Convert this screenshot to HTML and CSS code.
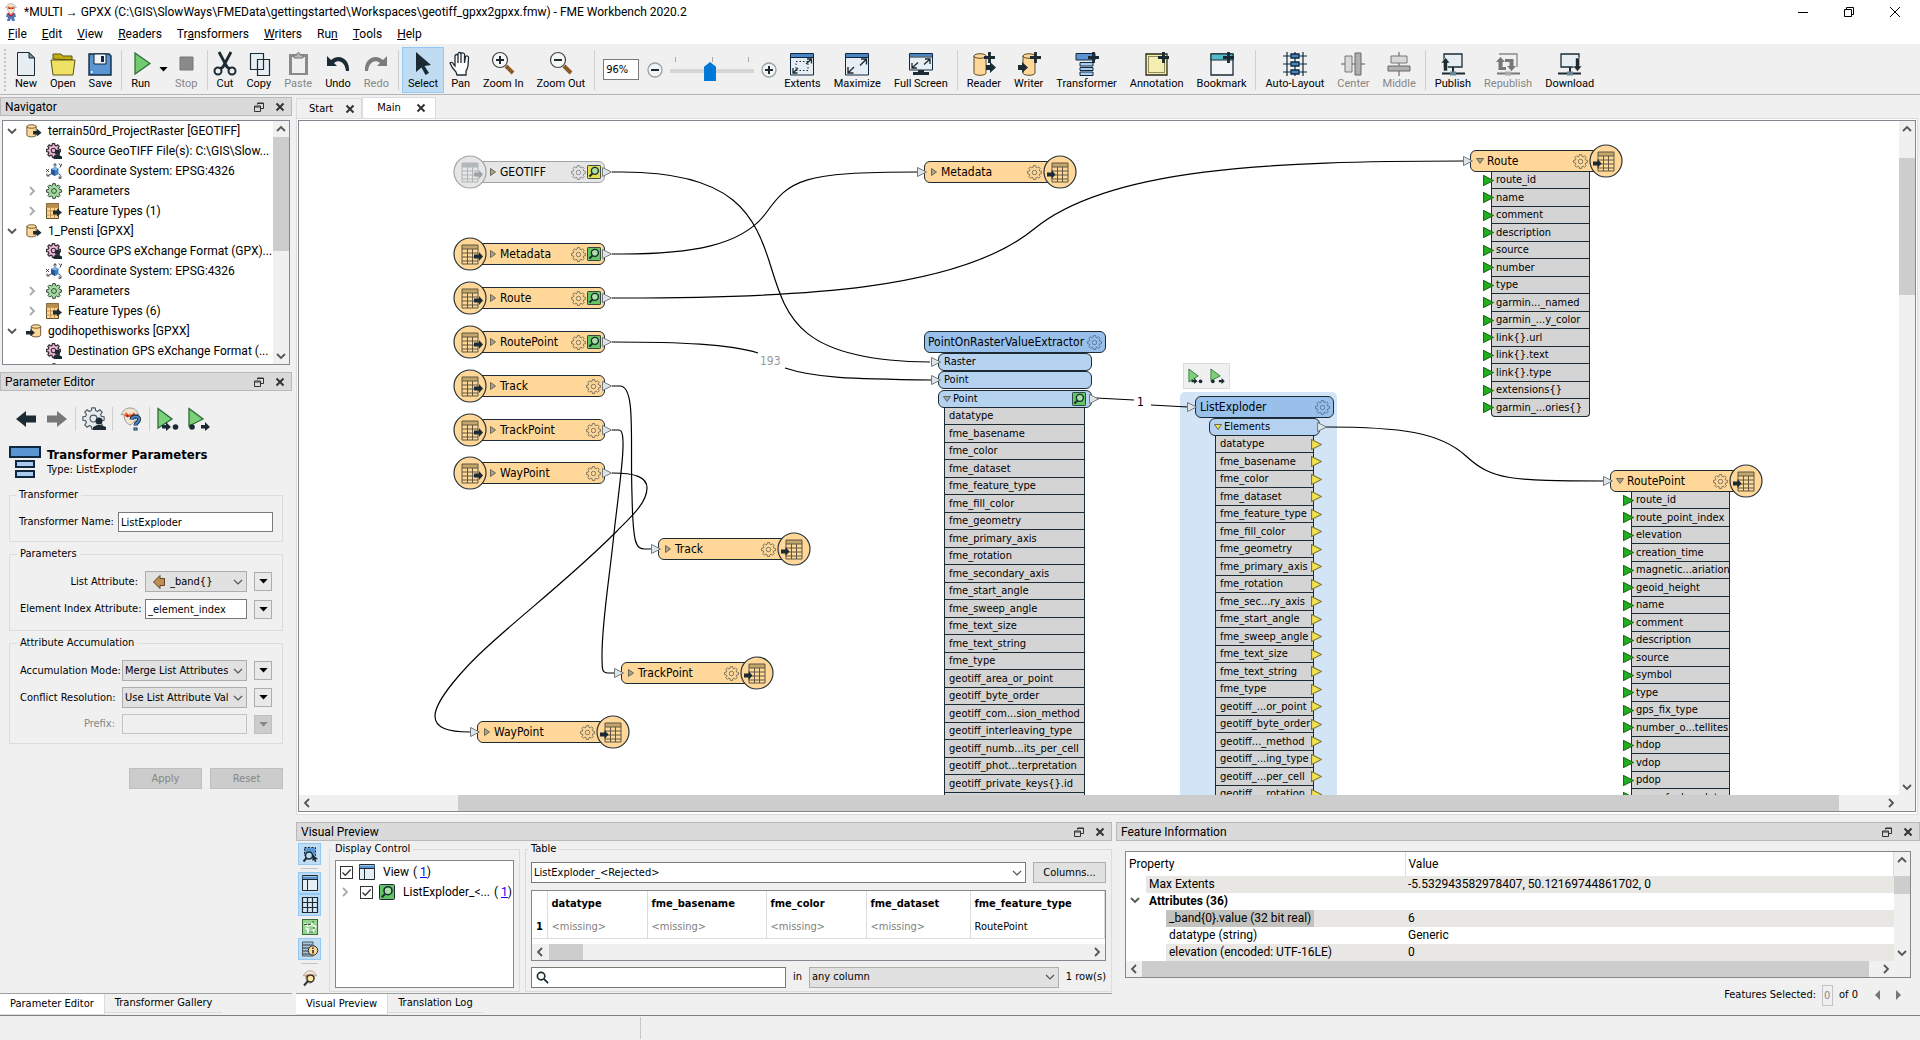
FILE: index.html
```html
<!DOCTYPE html>
<html lang="en">
<head>
<meta charset="utf-8">
<title>FME Workbench 2020.2</title>
<link rel="stylesheet" href="styles.css">
</head>
<body>
<svg class="defs" aria-hidden="true">
  <symbol id="gear" viewBox="-8 -8 16 16"><path d="M5.5-1.5L7.4-1.2V1.2L5.5 1.5L4.9 2.8L6.1 4.4L4.4 6.1L2.8 4.9L1.5 5.5L1.2 7.4H-1.2L-1.5 5.5L-2.8 4.9L-4.4 6.1L-6.1 4.4L-4.9 2.8L-5.5 1.5L-7.4 1.2V-1.2L-5.5-1.5L-4.9-2.8L-6.1-4.4L-4.4-6.1L-2.8-4.9L-1.5-5.5L-1.2-7.4H1.2L1.5-5.5L2.8-4.9L4.4-6.1L6.1-4.4L4.9-2.8Z" stroke-linejoin="round"/><circle r="2.4"/></symbol>
  <symbol id="inspect" viewBox="0 0 16 16"><rect x=".5" y=".5" width="15" height="15" rx="1" stroke="#1c2b33" fill="inherit"/><circle cx="9" cy="6.7" r="4" fill="#a9e0a4" stroke="#1c2b33" stroke-width="1.6"/><path d="M6 10L2.8 13.2" stroke="#1c2b33" stroke-width="2.2"/></symbol>
  <symbol id="reader-badge" viewBox="0 0 34 34"><circle cx="17" cy="17" r="16" fill="#ffd899" stroke="#2a3338" stroke-width="1.2"/><path d="M9 8H25V12H9Z" fill="#c4a56c"/><path d="M9 8H25V27H9ZM9 12H25M9 16H25M9 20H25M9 24H25M14.500 12V27M19.500 12V27" fill="none" stroke="#5d5643"/><path d="M21 17.500H26V15L30 19.500L26 24V21.500H21Z" fill="#1c2b33"/></symbol>
  <symbol id="reader-badge-off" viewBox="0 0 34 34"><circle cx="17" cy="17" r="16" fill="#e6e6e6" stroke="#a0a4a6" stroke-width="1.200"/><path d="M9 8H25V12H9Z" fill="#b4babc"/><path d="M9 8H25V27H9ZM9 12H25M9 16H25M9 20H25M9 24H25M14.500 12V27M19.500 12V27" fill="none" stroke="#b0b5b7"/><path d="M21 17.500H26V15L30 19.500L26 24V21.500H21Z" fill="#9ba3a6"/></symbol>
  <symbol id="writer-badge" viewBox="0 0 34 34"><circle cx="17" cy="17" r="16" fill="#ffd899" stroke="#2a3338" stroke-width="1.200"/><path d="M9 8H25V12H9Z" fill="#c4a56c"/><path d="M9 8H25V27H9ZM9 12H25M9 16H25M9 20H25M9 24H25M14.500 12V27M19.500 12V27" fill="none" stroke="#5d5643"/><path d="M4 17.500H8.500V15L12.500 19.500L8.500 24V21.500H4Z" fill="#1c2b33"/></symbol>
  <symbol id="port" viewBox="0 0 10 10"><path d="M.5.5L9.500 5L.5 9.500Z" fill="#dde5ea" stroke="#77797b"/></symbol>
  <symbol id="arr-green" viewBox="0 0 10 10"><path d="M.5.500L9.500 5L.5 9.500Z" fill="#22b01e" stroke="#1c6e1a"/></symbol>
  <symbol id="arr-yellow" viewBox="0 0 10 10"><path d="M.5.500L9.500 5L.5 9.500Z" fill="#f2e24e" stroke="#7d7633"/></symbol>
  <symbol id="tri-r" viewBox="0 0 8 8"><path d="M1.500.5L6.500 4L1.500 7.500Z" fill="#a9a48c" stroke="#6c6654"/></symbol>
  <symbol id="tri-d" viewBox="0 0 8 8"><path d="M.5 1.500L4 6.500L7.500 1.500Z" stroke="#6c6654"/></symbol>
  <symbol id="chev-r" viewBox="0 0 10 10"><path d="M3 1L7 5L3 9" fill="none" stroke-width="1.800"/></symbol>
  <symbol id="chev-d" viewBox="0 0 10 10"><path d="M1 3L5 7L9 3" fill="none" stroke-width="1.800"/></symbol>
  <symbol id="chev-u" viewBox="0 0 10 10"><path d="M1 7L5 3L9 7" fill="none" stroke-width="1.800"/></symbol>
  <symbol id="chev-l" viewBox="0 0 10 10"><path d="M7 1L3 5L7 9" fill="none" stroke-width="1.800"/></symbol>
  <symbol id="combo-v" viewBox="0 0 10 10"><path d="M1 3L5 7L9 3" fill="none" stroke="#555" stroke-width="1.200"/></symbol>
  <symbol id="drop" viewBox="0 0 10 6"><path d="M0 0H10L5 5.500Z" fill="currentColor"/></symbol>
  <symbol id="float" viewBox="0 0 10 10"><path d="M3.500 2.500V1H9.500V6.500H7M.5 4H6.500V9.500H.5ZM.5 5H6.500M3.500 1.500H9.500" fill="none" stroke="#333"/></symbol>
  <symbol id="close" viewBox="0 0 10 10"><path d="M1.500 1.500L8.500 8.500M8.500 1.500L1.500 8.500" stroke="#333" stroke-width="2"/></symbol>
  <symbol id="db-out" viewBox="0 0 18 18"><path d="M1 4C1 1.300 11.500 1.300 11.500 4V13.500C11.500 16.300 1 16.300 1 13.500Z" fill="#ffd899" stroke="#5c4a26"/><path d="M1 4C1 6.500 11.500 6.500 11.500 4" fill="none" stroke="#5c4a26"/><path d="M8 9H12.500V6.500L17.500 11L12.500 15V13H8Z" fill="#1c2b33"/></symbol>
  <symbol id="db-in" viewBox="0 0 18 18"><path d="M6 4C6 1.300 16.500 1.300 16.500 4V13.500C16.500 16.300 6 16.300 6 13.500Z" fill="#ffd899" stroke="#5c4a26"/><path d="M6 4C6 6.500 16.500 6.500 16.500 4" fill="none" stroke="#5c4a26"/><path d="M0 9H5V6.500L10 11L5 15V13H0Z" fill="#1c2b33"/></symbol>
  <symbol id="gear-user" viewBox="-8 -8 16 16"><use href="#gear" x="-8" y="-8" width="15" height="15" fill="#eebbd8" stroke="#3a2b35" stroke-width="1.300"/><circle cx="3.500" cy="1.200" r="2.600" fill="#1c2b33"/><path d="M-.5 8V5.500L2.500 4H5L8 5.500V8Z" fill="#1c2b33"/></symbol>
  <symbol id="cube" viewBox="0 0 16 16"><path d="M5 6L9 4L12.500 5.500V11L9 13L5 11Z" fill="#3f7fc4"/><path d="M5 6L9 4L12.500 5.500L9 7.500Z" fill="#7fb2e6"/><path d="M9 7.500V13L5 11V6Z" fill="#275a94"/><path d="M9 4V1M7.500 2.500L9 .5L10.500 2.500M5 11L2 12.500M1 10.500V13H3.500M12.500 11L15 12.500M0 6L3 9M3 6L0 9M13 .5L14.500 2.500M16 .5L14 4.500M12.500 14H15.500L12.500 16H15.500" stroke="#334" stroke-width=".9" fill="none"/></symbol>
  <symbol id="ftype" viewBox="0 0 16 16"><path d="M.5.5H12.500V15.500H.5Z" fill="#ffd899" stroke="#5c4a26"/><path d="M.5.5H12.500V4.500H.5Z" fill="#b98d4f"/><path d="M.5 4.500H12.500M.5 8H12.500M.5 12H12.500M4.500 4.500V15.500M8.500 4.500V15.500" stroke="#c19650" fill="none"/><path d="M7 7.500H11V5.500L16 9.500L11 13.500V11.500H7Z" fill="#1c2b33"/></symbol>
  <symbol id="run-to" viewBox="0 0 22 24"><path d="M1 1.500L15 12L1 21Z" fill="#7bd179" stroke="#2c6b33" stroke-width="1.300"/><path d="M5 18H9V15L14 20L9 24V21.500H5Z" fill="#1c2b33"/><circle cx="18.500" cy="20" r="2.800" fill="#1c2b33"/></symbol>
  <symbol id="run-from" viewBox="0 0 22 24"><path d="M1 1.500L15 12L1 19Z" fill="#7bd179" stroke="#2c6b33" stroke-width="1.300"/><circle cx="4" cy="20" r="2.800" fill="#1c2b33"/><path d="M13 18H17V15L22 20L17 24V21.500H13Z" fill="#1c2b33"/></symbol>
  <symbol id="view" viewBox="0 0 16 16"><path d="M.5.500H15.500V15.500H.5Z" fill="#e6eef3" stroke="#1c2b33"/><path d="M.5 1.500H15.500V4H.5Z" fill="#5a95d2"/><path d="M.5 4.500H15.500M5.500 4.500V15.500" stroke="#1c2b33"/></symbol>
  <symbol id="plus" viewBox="0 0 10 10"><path d="M5 0V10M0 5H10" stroke="#1c2b33" stroke-width="2.600"/></symbol>
  <symbol id="face" viewBox="0 0 20 20"><path d="M10 1C5 1 3 4 1 8L4 7C4 13 6 16 10 18C14 16 16 13 16 7L19 8C17 4 15 1 10 1Z" fill="#f3e6d0" stroke="#999"/><path d="M6 5L9 8L10 6L11 8L14 5L16 9L12 10H8L4 9Z" fill="#e8642c"/><circle cx="7.500" cy="9" r="1.200" fill="#a11"/><circle cx="12.500" cy="9" r="1.200" fill="#a11"/></symbol>
</svg>

<header class="titlebar">
  <svg class="logo" viewBox="0 0 16 18"><use href="#face" width="16" height="12"/><path d="M4 10L8 12L12 10L13 14L11 14L12 18H9L8 15L7 18H4L5 14H3Z" fill="#4a76b5"/><path d="M5 10L8 13L11 10" fill="none" stroke="#c22" stroke-width="1.500"/></svg>
  <h1>*MULTI → GPXX (C:\GIS\SlowWays\FMEData\gettingstarted\Workspaces\geotiff_gpxx2gpxx.fmw) - FME Workbench 2020.2</h1>
  <div class="winbtns">
    <button aria-label="Minimize"><svg viewBox="0 0 10 10"><path d="M0 5.500H10" stroke="#000"/></svg></button>
    <button aria-label="Restore"><svg viewBox="0 0 10 10"><path d="M.5 2.500H7.500V9.500H.5ZM2.500 2.500V.5H9.500V7.500H7.500" fill="none" stroke="#000"/></svg></button>
    <button aria-label="Close"><svg viewBox="0 0 10 10"><path d="M0 0L10 10M10 0L0 10" stroke="#000"/></svg></button>
  </div>
</header>
<nav class="menubar">
  <button><u>F</u>ile</button><button><u>E</u>dit</button><button><u>V</u>iew</button><button><u>R</u>eaders</button><button>Tr<u>a</u>nsformers</button><button><u>W</u>riters</button><button>Ru<u>n</u></button><button><u>T</u>ools</button><button><u>H</u>elp</button>
</nav>

<div class="toolbar" role="toolbar">
  <span class="grip"></span>
  <button class="tool"><svg viewBox="0 0 24 24"><path d="M3.500.500H15L20.500 6V23.500H3.500Z" fill="#e6eef3" stroke="#1c2b33"/><path d="M15 .5V6H20.500Z" fill="#7796a6" stroke="#1c2b33"/></svg>New</button>
  <button class="tool"><svg viewBox="0 0 24 24"><path d="M2 7V2H10L12 4H21V8Z" fill="#c3ae12" stroke="#5c5410"/><path d="M0 8H24L22 23H2Z" fill="#efe163" stroke="#5c5410"/></svg>Open</button>
  <button class="tool"><svg viewBox="0 0 24 24"><path d="M1 2H21L23 4V23H1Z" fill="#5a95d2" stroke="#10283f" stroke-width="1.400"/><path d="M6 2H18V12H6Z" fill="#f2f6f8" stroke="#10283f"/><path d="M13 4H16V10H13Z" fill="#10283f"/><path d="M3 19H4.500V21H3Z" fill="#fff"/></svg>Save</button>
  <span class="sep"></span>
  <button class="tool"><svg viewBox="0 0 24 24"><path d="M6 1L21 11.500L6 22Z" fill="#71cc6f" stroke="#2c6b33" stroke-width="1.200"/></svg>Run</button>
  <button class="drop" aria-label="Run options"><svg viewBox="0 0 10 6"><use href="#drop"/></svg></button>
  <button class="tool" disabled><svg viewBox="0 0 24 24"><path d="M6 5H19V18H6Z" fill="#8a8a8a" stroke="#777"/></svg>Stop</button>
  <span class="sep"></span>
  <button class="tool"><svg viewBox="0 0 24 24"><path d="M6 0L14 15L17 17M18 0L10 15L7 17" stroke="#1c2b33" stroke-width="2.800" fill="none"/><circle cx="5" cy="19" r="3.500" fill="none" stroke="#1c2b33" stroke-width="2"/><circle cx="19" cy="19" r="3.500" fill="none" stroke="#1c2b33" stroke-width="2"/></svg>Cut</button>
  <button class="tool"><svg viewBox="0 0 24 24"><path d="M3.500 1.500H16.500V17.500H3.500ZM10.500 7.500H22.500V23.500H10.500Z" fill="#e6eef3" stroke="#1c2b33" stroke-width="1.200"/></svg>Copy</button>
  <button class="tool" disabled><svg viewBox="0 0 24 24"><path d="M3 2H22V23H3Z" fill="#8a8a8a"/><path d="M6 5H19V21H6Z" fill="#efefef"/><path d="M8 3H11C11-.5 14-.500 14 3H17V6H8Z" fill="#bbb" stroke="#777"/></svg>Paste</button>
  <button class="tool"><svg viewBox="0 0 24 24"><path d="M1 4V14H11L8 11C13 7 19 10 20 19L23 19C24 7 13 1 5 8Z" fill="#1c2b33"/></svg>Undo</button>
  <button class="tool" disabled><svg viewBox="0 0 24 24"><path d="M23 4V14H13L16 11C11 7 5 10 4 19L1 19C0 7 11 1 19 8Z" fill="#7c7c7c"/></svg>Redo</button>
  <span class="sep"></span>
  <button class="tool on"><svg viewBox="0 0 24 24"><path d="M5 0L20 13L13.500 14L18 21L14.500 23L10.500 15.500L5 20Z" fill="#1c2b33"/></svg>Select</button>
  <button class="tool"><svg viewBox="0 0 24 24"><path d="M8 23L7 20C4 17 2 14 1 11C2 10 4 10 5 13L6 14V4C6 2 9 2 9 4V11V2C9 0 12 0 12 2V11V2C13 0 16 1 15.500 3V11L16.500 5C17 3 20 4 19.500 6C19 11 20 15 17 19V23Z" fill="#fff" stroke="#1c2b33" stroke-width="1.300"/></svg>Pan</button>
  <button class="tool"><svg viewBox="0 0 24 24"><circle cx="9" cy="8" r="7.500" fill="#f7f7f7" stroke="#444" stroke-width="1.200"/><path d="M9 4V12M5 8H13" stroke="#1c2b33" stroke-width="2"/><path d="M15 14L22 21" stroke="#8d5a24" stroke-width="4"/></svg>Zoom In</button>
  <button class="tool"><svg viewBox="0 0 24 24"><circle cx="9" cy="8" r="7.500" fill="#f7f7f7" stroke="#444" stroke-width="1.200"/><path d="M5 8H13" stroke="#1c2b33" stroke-width="2"/><path d="M15 14L22 21" stroke="#8d5a24" stroke-width="4"/></svg>Zoom Out</button>
  <span class="sep"></span>
  <input class="zoombox" type="text" value="96%" aria-label="Zoom level">
  <button class="round" aria-label="Zoom out"><svg viewBox="0 0 16 16"><circle cx="8" cy="8" r="7" fill="#f2f4f5" stroke="#9aa0a4" stroke-width="1.300"/><path d="M4 8H12" stroke="#1c2b33" stroke-width="2"/></svg></button>
  <span class="slider"><input type="range" min="0" max="100" value="47" aria-label="Zoom"></span>
  <button class="round" aria-label="Zoom in"><svg viewBox="0 0 16 16"><circle cx="8" cy="8" r="7" fill="#f2f4f5" stroke="#9aa0a4" stroke-width="1.300"/><path d="M4 8H12M8 4V12" stroke="#1c2b33" stroke-width="2"/></svg></button>
  <button class="tool"><svg viewBox="0 0 24 24"><path d="M.5 1.500H23.500V23H.5Z" fill="#e6eef3" stroke="#10283f"/><path d="M1 2H23V5H1Z" fill="#4a86c6"/><path d="M.5 5.500H23.500" stroke="#10283f"/><path d="M6 9.500H18V18.500H6Z" fill="none" stroke="#10283f" stroke-dasharray="1.500 2"/><path d="M17 7H21.500V11.500M21 7.500L16 12M3 16V21H7.500M3.500 20.500L8 16" fill="none" stroke="#1c2b33" stroke-width="1.300"/></svg>Extents</button>
  <button class="tool"><svg viewBox="0 0 24 24"><path d="M.5 1.500H23.500V23H.5Z" fill="#e6eef3" stroke="#10283f"/><path d="M1 2H23V5H1Z" fill="#4a86c6"/><path d="M.5 5.500H23.500" stroke="#10283f"/><path d="M16 7H21.500V12.500M21 7.500L15 13.500M3 15V21H8.500M3.500 20.500L9 15" fill="none" stroke="#1c2b33" stroke-width="1.400"/></svg>Maximize</button>
  <button class="tool"><svg viewBox="0 0 24 24"><path d="M.5 1.500H23.500V18H.5Z" fill="#e6eef3" stroke="#10283f"/><path d="M1 2H23V4.500H1Z" fill="#4a86c6"/><path d="M.5 5H23.500" stroke="#10283f"/><path d="M16 7H21V12M20.500 7.500L15 12.500M3 11V16H8M3.500 15.500L9 10.500" fill="none" stroke="#1c2b33" stroke-width="1.300"/><path d="M9 18H15V20H20V23H4V20H9Z" fill="#1c2b33"/></svg>Full Screen</button>
  <span class="sep"></span>
  <button class="tool"><svg viewBox="0 0 24 24"><path d="M2 4C2 1 14 1 14 4V21C14 24 2 24 2 21Z" fill="#ffd899" stroke="#5c4a26"/><path d="M2 4C2 7 14 7 14 4" fill="none" stroke="#5c4a26"/><use href="#plus" x="12" y="0" width="11" height="11"/><path d="M14 13H18V10L24 15.500L18 21V18H14Z" fill="#1c2b33"/></svg>Reader</button>
  <button class="tool"><svg viewBox="0 0 24 24"><path d="M6 4C6 1 18 1 18 4V21C18 24 6 24 6 21Z" fill="#ffd899" stroke="#5c4a26"/><path d="M6 4C6 7 18 7 18 4" fill="none" stroke="#5c4a26"/><use href="#plus" x="13" y="0" width="11" height="11"/><path d="M1 13H5V10L11 15.500L5 21V18H1Z" fill="#1c2b33"/></svg>Writer</button>
  <button class="tool"><svg viewBox="0 0 24 24"><path d="M1 1.500H20V8H1Z" fill="#5a95d2" stroke="#10283f"/><use href="#plus" x="13" y="0" width="11" height="11"/><path d="M5 10.500H18V14H5ZM5 15.500H18V18.500H5ZM5 20H18V23.500H5Z" fill="#a9ccf0" stroke="#10283f"/></svg>Transformer</button>
  <button class="tool"><svg viewBox="0 0 24 24"><path d="M1 2H22V23H1Z" fill="#f3eeb0" stroke="#2c2a14" stroke-width="1.300"/><path d="M3.500 4.500H19.500V20.500H3.500Z" fill="none" stroke="#2c2a14" stroke-dasharray="1 1"/><use href="#plus" x="13" y="0" width="11" height="11"/></svg>Annotation</button>
  <button class="tool"><svg viewBox="0 0 24 24"><path d="M1 2H23V23H1Z" fill="#f2f4f5" stroke="#1c2b33" stroke-width="1.300"/><path d="M1 2H23V8H1Z" fill="#53bcc6" stroke="#1c2b33"/><use href="#plus" x="13" y="0" width="11" height="11"/></svg>Bookmark</button>
  <span class="sep"></span>
  <button class="tool"><svg viewBox="0 0 24 24"><path d="M0 4H24M0 12H24M0 20H24M4 0V24M20 0V24M12 0V24" stroke="#10283f" stroke-width="1.200"/><path d="M8 2H16V6H8ZM8 10H16V14H8ZM8 18H16V22H8Z" fill="#4a86c6" stroke="#10283f" stroke-width="1.300"/></svg>Auto-Layout</button>
  <button class="tool" disabled><svg viewBox="0 0 24 24"><path d="M0 12H24" stroke="#777" stroke-width="1.300"/><path d="M4 4H11V20H4Z" fill="#d9d9d9" stroke="#777"/><path d="M14 1H20V23H14Z" fill="#b0b0b0" stroke="#666"/></svg>Center</button>
  <button class="tool" disabled><svg viewBox="0 0 24 24"><path d="M12 0V24" stroke="#777" stroke-width="1.300"/><path d="M4 4H20V11H4Z" fill="#d9d9d9" stroke="#777"/><path d="M1 14H23V19H1Z" fill="#b0b0b0" stroke="#666"/></svg>Middle</button>
  <span class="sep"></span>
  <button class="tool"><svg viewBox="0 0 24 24"><path d="M3 2H21V15H3Z" fill="#e6eef3" stroke="#1c2b33" stroke-width="1.300"/><path d="M12 15V20M1 21.500H24" stroke="#1c2b33" stroke-width="2"/><path d="M9 19.500H15V23.500H9Z" fill="#6a8797"/><path d="M0 11L4.500 5.500L9 11H6.500V19H2.500V11Z" fill="#1c2b33" stroke="#efefef" stroke-width=".6"/></svg>Publish</button>
  <button class="tool" disabled><svg viewBox="0 0 24 24"><path d="M3 2H21V15" fill="none" stroke="#888" stroke-width="1.300"/><path d="M1 21.500H24" stroke="#777" stroke-width="2"/><path d="M9 19.500H15V23.500H9Z" fill="#aaa"/><path d="M0 10L4.500 5L9 10H6.500V15H10V18H2.500V10ZM9 7H17.500V14H20L15.500 19L11 14H13.500V10H9Z" fill="#777"/></svg>Republish</button>
  <button class="tool"><svg viewBox="0 0 24 24"><path d="M3 2H21V15H3Z" fill="#e6eef3" stroke="#1c2b33" stroke-width="1.300"/><path d="M12 15V20M0 21.500H23" stroke="#1c2b33" stroke-width="2"/><path d="M9 19.500H15V23.500H9Z" fill="#6a8797"/><path d="M15 14L19.500 19.500L24 14H21.500V6H17.500V14Z" fill="#1c2b33" stroke="#efefef" stroke-width=".6"/></svg>Download</button>
</div>

<main class="work">
  <aside class="left">
    <div class="dock-title"><h2>Navigator</h2><button aria-label="Float"><svg><use href="#float"/></svg></button><button aria-label="Close"><svg><use href="#close"/></svg></button></div>
    <div class="nav-box">
      <ul class="tree">
        <li class="lv1"><svg class="tw open"><use href="#chev-d"/></svg><svg class="ic"><use href="#db-out"/></svg>terrain50rd_ProjectRaster [GEOTIFF]</li>
        <li><span class="tw"></span><svg class="ic"><use href="#gear-user"/></svg>Source GeoTIFF File(s): C:\GIS\Slow...</li>
        <li><span class="tw"></span><svg class="ic"><use href="#cube"/></svg>Coordinate System: EPSG:4326</li>
        <li><svg class="tw"><use href="#chev-r"/></svg><svg class="ic green"><use href="#gear"/></svg>Parameters</li>
        <li><svg class="tw"><use href="#chev-r"/></svg><svg class="ic"><use href="#ftype"/></svg>Feature Types (1)</li>
        <li class="lv1"><svg class="tw open"><use href="#chev-d"/></svg><svg class="ic"><use href="#db-out"/></svg>1_Pensti [GPXX]</li>
        <li><span class="tw"></span><svg class="ic"><use href="#gear-user"/></svg>Source GPS eXchange Format (GPX)...</li>
        <li><span class="tw"></span><svg class="ic"><use href="#cube"/></svg>Coordinate System: EPSG:4326</li>
        <li><svg class="tw"><use href="#chev-r"/></svg><svg class="ic green"><use href="#gear"/></svg>Parameters</li>
        <li><svg class="tw"><use href="#chev-r"/></svg><svg class="ic"><use href="#ftype"/></svg>Feature Types (6)</li>
        <li class="lv1"><svg class="tw open"><use href="#chev-d"/></svg><svg class="ic"><use href="#db-in"/></svg>godihopethisworks [GPXX]</li>
        <li><span class="tw"></span><svg class="ic"><use href="#gear-user"/></svg>Destination GPS eXchange Format (...</li>
        <li><span class="tw"></span><svg class="ic green"><use href="#gear"/></svg></li>
      </ul>
      <div class="vbar"><svg><use href="#chev-u"/></svg><div class="rail"><i class="thumb nav-thumb"></i></div><svg><use href="#chev-d"/></svg></div>
    </div>

    <div class="dock-title"><h2>Parameter Editor</h2><button aria-label="Float"><svg><use href="#float"/></svg></button><button aria-label="Close"><svg><use href="#close"/></svg></button></div>
    <form class="params">
      <div class="ptools">
        <button type="button" aria-label="Back"><svg viewBox="0 0 24 24"><path d="M2 12L12 4V8.500H22V15.500H12V20Z" fill="#1c2b33"/></svg></button>
        <button type="button" aria-label="Forward"><svg viewBox="0 0 24 24"><path d="M22 12L12 4V8.500H2V15.500H12V20Z" fill="#777"/></svg></button>
        <span class="psep"></span>
        <button type="button" aria-label="Settings"><svg viewBox="0 0 24 24"><use href="#gear" width="23" height="23" fill="#e6eaec" stroke="#4d5a61" stroke-width=".8"/><circle cx="17" cy="14" r="3.500" fill="#1c2b33"/><path d="M11 23V20L15.500 18H19L24 20V23Z" fill="#1c2b33"/></svg></button>
        <span class="psep"></span>
        <button type="button" aria-label="Help"><svg viewBox="0 0 24 24"><use href="#face" width="22" height="20"/><path d="M12.500 12.500C13 8.500 20.500 8.500 20 12.500C20 15 16.500 15.500 16.500 18.500M16.500 20.500V23.500" fill="none" stroke="#123" stroke-width="4"/><path d="M12.500 12.500C13 8.500 20.500 8.500 20 12.500C20 15 16.500 15.500 16.500 18.500M16.500 21V23" fill="none" stroke="#4a86c6" stroke-width="2.200"/></svg></button>
        <span class="psep"></span>
        <button type="button" aria-label="Run to this"><svg viewBox="0 0 22 24"><use href="#run-to"/></svg></button>
        <button type="button" aria-label="Run from this"><svg viewBox="0 0 22 24"><use href="#run-from"/></svg></button>
      </div>
      <div class="phead">
        <svg viewBox="0 0 32 32"><path d="M1 1H31V11H1Z" fill="#5a95d2" stroke="#10283f" stroke-width="2"/><path d="M7 15H25V21H7ZM7 25H25V31H7Z" fill="#a9ccf0" stroke="#10283f" stroke-width="2"/></svg>
        <div><h3>Transformer Parameters</h3><p>Type: ListExploder</p></div>
      </div>
      <fieldset class="g1"><legend>Transformer</legend>
        <label for="tn">Transformer Name:</label><input id="tn" type="text" value="ListExploder">
      </fieldset>
      <fieldset class="g2"><legend>Parameters</legend>
        <label for="la">List Attribute:</label>
        <span class="combo"><select id="la" class="with-icon"><option>_band{}</option></select><svg class="attr" viewBox="0 0 12 14"><path d="M.5 7L7 .5V3.500H11.500V10.500H7V13.500Z" fill="#bd8f55" stroke="#5f4623"/></svg><svg class="cv"><use href="#combo-v"/></svg></span>
        <button type="button" class="dd" aria-label="List attribute options"><svg><use href="#drop"/></svg></button>
        <label for="ei">Element Index Attribute:</label><input id="ei" type="text" value="_element_index">
        <button type="button" class="dd" aria-label="Index options"><svg><use href="#drop"/></svg></button>
      </fieldset>
      <fieldset class="g3"><legend>Attribute Accumulation</legend>
        <label for="am">Accumulation Mode:</label>
        <span class="combo"><select id="am"><option>Merge List Attributes</option></select><svg class="cv"><use href="#combo-v"/></svg></span>
        <button type="button" class="dd" aria-label="Mode options"><svg><use href="#drop"/></svg></button>
        <label for="cr">Conflict Resolution:</label>
        <span class="combo"><select id="cr"><option>Use List Attribute Values</option></select><svg class="cv"><use href="#combo-v"/></svg></span>
        <button type="button" class="dd" aria-label="Conflict options"><svg><use href="#drop"/></svg></button>
        <label for="px" class="off">Prefix:</label><input id="px" type="text" disabled>
        <button type="button" class="dd" disabled aria-label="Prefix options"><svg><use href="#drop"/></svg></button>
      </fieldset>
      <div class="pbtns"><button type="button" disabled>Apply</button><button type="button" disabled>Reset</button></div>
    </form>
    <div class="btabs"><button class="sel">Parameter Editor</button><button>Transformer Gallery</button></div>
  </aside>

  <section class="right">
    <div class="tabs">
      <div class="tab">Start<button aria-label="Close Start"><svg><use href="#close"/></svg></button></div>
      <div class="tab sel">Main<button aria-label="Close Main"><svg><use href="#close"/></svg></button></div>
    </div>
    <div class="canvas-frame"><div class="canvas-box">
      <div class="canvas">
        <div class="halo"></div>
        <svg class="links"><g transform="translate(-299 -121)">
          <path d="M612 172H622C735 172 755 215 771 267S800 361 930 362"/>
          <path d="M612 254H622C690 254 742 246 766 213S800 172 918 172"/>
          <path d="M612 298H622C800 298 960 290 1034 229S1270 161 1465 161"/>
          <path d="M612 342C680 342 730 344 758 353M785 368C815 378 850 379 932 380"/>
          <path d="M612 386H620C636 386 630 440 632 495C633 545 636 549 645 549H652"/>
          <path d="M612 430H619C628 430 620 480 614 533C610 575 602 620 602 655C602 670 602 673 608 673H616"/>
          <path d="M612 473C635 473 647 477 647 488C647 505 625 522 616 532C570 578 525 612 487 647C465 667 435 700 435 716C435 728 448 732 470 732"/>
          <path d="M1096 398L1134 400M1151 405L1188 407"/>
          <path d="M1326 427C1400 427 1440 432 1466 456S1510 481 1605 481"/>
        </g></svg>
        <span class="count c193">193</span><span class="count c1">1</span>

        <div class="node rd n-geotiff off"><svg class="badge"><use href="#reader-badge-off"/></svg><div class="body"><svg class="tri"><use href="#tri-r"/></svg><b>GEOTIFF</b><svg class="gear"><use href="#gear"/></svg><svg class="insp y"><use href="#inspect"/></svg></div><svg class="port"><use href="#port"/></svg></div>
        <div class="node rd n-metadata"><svg class="badge"><use href="#reader-badge"/></svg><div class="body"><svg class="tri"><use href="#tri-r"/></svg><b>Metadata</b><svg class="gear"><use href="#gear"/></svg><svg class="insp"><use href="#inspect"/></svg></div><svg class="port"><use href="#port"/></svg></div>
        <div class="node rd n-route"><svg class="badge"><use href="#reader-badge"/></svg><div class="body"><svg class="tri"><use href="#tri-r"/></svg><b>Route</b><svg class="gear"><use href="#gear"/></svg><svg class="insp"><use href="#inspect"/></svg></div><svg class="port"><use href="#port"/></svg></div>
        <div class="node rd n-routepoint"><svg class="badge"><use href="#reader-badge"/></svg><div class="body"><svg class="tri"><use href="#tri-r"/></svg><b>RoutePoint</b><svg class="gear"><use href="#gear"/></svg><svg class="insp"><use href="#inspect"/></svg></div><svg class="port"><use href="#port"/></svg></div>
        <div class="node rd n-track"><svg class="badge"><use href="#reader-badge"/></svg><div class="body"><svg class="tri"><use href="#tri-r"/></svg><b>Track</b><svg class="gear"><use href="#gear"/></svg></div><svg class="port"><use href="#port"/></svg></div>
        <div class="node rd n-trackpoint"><svg class="badge"><use href="#reader-badge"/></svg><div class="body"><svg class="tri"><use href="#tri-r"/></svg><b>TrackPoint</b><svg class="gear"><use href="#gear"/></svg></div><svg class="port"><use href="#port"/></svg></div>
        <div class="node rd n-waypoint"><svg class="badge"><use href="#reader-badge"/></svg><div class="body"><svg class="tri"><use href="#tri-r"/></svg><b>WayPoint</b><svg class="gear"><use href="#gear"/></svg></div><svg class="port"><use href="#port"/></svg></div>

        <div class="node wr w-metadata"><svg class="port"><use href="#port"/></svg><div class="body"><svg class="tri"><use href="#tri-r"/></svg><b>Metadata</b><svg class="gear"><use href="#gear"/></svg></div><svg class="badge"><use href="#writer-badge"/></svg></div>
        <div class="node wr w-track"><svg class="port"><use href="#port"/></svg><div class="body"><svg class="tri"><use href="#tri-r"/></svg><b>Track</b><svg class="gear"><use href="#gear"/></svg></div><svg class="badge"><use href="#writer-badge"/></svg></div>
        <div class="node wr w-trackpoint"><svg class="port"><use href="#port"/></svg><div class="body"><svg class="tri"><use href="#tri-r"/></svg><b>TrackPoint</b><svg class="gear"><use href="#gear"/></svg></div><svg class="badge"><use href="#writer-badge"/></svg></div>
        <div class="node wr w-waypoint"><svg class="port"><use href="#port"/></svg><div class="body"><svg class="tri"><use href="#tri-r"/></svg><b>WayPoint</b><svg class="gear"><use href="#gear"/></svg></div><svg class="badge"><use href="#writer-badge"/></svg></div>

        <div class="stack w-route">
          <ul class="attrs in">
            <li><svg><use href="#arr-green"/></svg>route_id</li><li><svg><use href="#arr-green"/></svg>name</li><li><svg><use href="#arr-green"/></svg>comment</li><li><svg><use href="#arr-green"/></svg>description</li><li><svg><use href="#arr-green"/></svg>source</li><li><svg><use href="#arr-green"/></svg>number</li><li><svg><use href="#arr-green"/></svg>type</li><li><svg><use href="#arr-green"/></svg>garmin..._named</li><li><svg><use href="#arr-green"/></svg>garmin_...y_color</li><li><svg><use href="#arr-green"/></svg>link{}.url</li><li><svg><use href="#arr-green"/></svg>link{}.text</li><li><svg><use href="#arr-green"/></svg>link{}.type</li><li><svg><use href="#arr-green"/></svg>extensions{}</li><li><svg><use href="#arr-green"/></svg>garmin_...ories{}</li>
          </ul>
          <div class="node wr"><svg class="port"><use href="#port"/></svg><div class="body"><svg class="tri tan"><use href="#tri-d"/></svg><b>Route</b><svg class="gear"><use href="#gear"/></svg></div><svg class="badge"><use href="#writer-badge"/></svg></div>
        </div>
        <div class="stack w-routepoint">
          <ul class="attrs in">
            <li><svg><use href="#arr-green"/></svg>route_id</li><li><svg><use href="#arr-green"/></svg>route_point_index</li><li><svg><use href="#arr-green"/></svg>elevation</li><li><svg><use href="#arr-green"/></svg>creation_time</li><li><svg><use href="#arr-green"/></svg>magnetic...ariation</li><li><svg><use href="#arr-green"/></svg>geoid_height</li><li><svg><use href="#arr-green"/></svg>name</li><li><svg><use href="#arr-green"/></svg>comment</li><li><svg><use href="#arr-green"/></svg>description</li><li><svg><use href="#arr-green"/></svg>source</li><li><svg><use href="#arr-green"/></svg>symbol</li><li><svg><use href="#arr-green"/></svg>type</li><li><svg><use href="#arr-green"/></svg>gps_fix_type</li><li><svg><use href="#arr-green"/></svg>number_o...tellites</li><li><svg><use href="#arr-green"/></svg>hdop</li><li><svg><use href="#arr-green"/></svg>vdop</li><li><svg><use href="#arr-green"/></svg>pdop</li><li><svg><use href="#arr-green"/></svg>age_of...dgpsdata</li>
          </ul>
          <div class="node wr"><svg class="port"><use href="#port"/></svg><div class="body"><svg class="tri tan"><use href="#tri-d"/></svg><b>RoutePoint</b><svg class="gear"><use href="#gear"/></svg></div><svg class="badge"><use href="#writer-badge"/></svg></div>
        </div>

        <div class="xf extractor">
          <div class="xtitle"><b>PointOnRasterValueExtractor</b><svg class="gear"><use href="#gear"/></svg></div>
          <div class="xrow"><svg class="port pin"><use href="#port"/></svg>Raster</div>
          <div class="xrow"><svg class="port pin"><use href="#port"/></svg>Point</div>
          <div class="xrow out"><svg class="tri grey"><use href="#tri-d"/></svg><span>Point</span><svg class="insp"><use href="#inspect"/></svg><svg class="port pout"><use href="#port"/></svg></div>
          <ul class="attrs">
            <li>datatype</li><li>fme_basename</li><li>fme_color</li><li>fme_dataset</li><li>fme_feature_type</li><li>fme_fill_color</li><li>fme_geometry</li><li>fme_primary_axis</li><li>fme_rotation</li><li>fme_secondary_axis</li><li>fme_start_angle</li><li>fme_sweep_angle</li><li>fme_text_size</li><li>fme_text_string</li><li>fme_type</li><li>geotiff_area_or_point</li><li>geotiff_byte_order</li><li>geotiff_com...sion_method</li><li>geotiff_interleaving_type</li><li>geotiff_numb...its_per_cell</li><li>geotiff_phot...terpretation</li><li>geotiff_private_keys{}.id</li><li></li>
          </ul>
        </div>

        <div class="mini"><button aria-label="Run to this"><svg viewBox="0 0 22 24"><use href="#run-to"/></svg></button><button aria-label="Run from this"><svg viewBox="0 0 22 24"><use href="#run-from"/></svg></button></div>
        <div class="xf exploder">
          <div class="xtitle"><svg class="port pin"><use href="#port"/></svg><b>ListExploder</b><svg class="gear"><use href="#gear"/></svg></div>
          <div class="xrow out"><svg class="tri yel"><use href="#tri-d"/></svg><span>Elements</span><svg class="port pout"><use href="#port"/></svg></div>
          <ul class="attrs outp">
            <li>datatype<svg><use href="#arr-yellow"/></svg></li><li>fme_basename<svg><use href="#arr-yellow"/></svg></li><li>fme_color<svg><use href="#arr-yellow"/></svg></li><li>fme_dataset<svg><use href="#arr-yellow"/></svg></li><li>fme_feature_type<svg><use href="#arr-yellow"/></svg></li><li>fme_fill_color<svg><use href="#arr-yellow"/></svg></li><li>fme_geometry<svg><use href="#arr-yellow"/></svg></li><li>fme_primary_axis<svg><use href="#arr-yellow"/></svg></li><li>fme_rotation<svg><use href="#arr-yellow"/></svg></li><li>fme_sec...ry_axis<svg><use href="#arr-yellow"/></svg></li><li>fme_start_angle<svg><use href="#arr-yellow"/></svg></li><li>fme_sweep_angle<svg><use href="#arr-yellow"/></svg></li><li>fme_text_size<svg><use href="#arr-yellow"/></svg></li><li>fme_text_string<svg><use href="#arr-yellow"/></svg></li><li>fme_type<svg><use href="#arr-yellow"/></svg></li><li>geotiff_...or_point<svg><use href="#arr-yellow"/></svg></li><li>geotiff_byte_order<svg><use href="#arr-yellow"/></svg></li><li>geotiff..._method<svg><use href="#arr-yellow"/></svg></li><li>geotiff_...ing_type<svg><use href="#arr-yellow"/></svg></li><li>geotiff_...per_cell<svg><use href="#arr-yellow"/></svg></li><li>geotiff_...rotation<svg><use href="#arr-yellow"/></svg></li>
          </ul>
        </div>
      </div>
      <div class="vbar"><svg><use href="#chev-u"/></svg><div class="rail"><i class="thumb canvas-v"></i></div><svg><use href="#chev-d"/></svg></div>
      <div class="hbar"><svg><use href="#chev-l"/></svg><div class="rail"><i class="thumb canvas-h"></i></div><svg><use href="#chev-r"/></svg></div>
    </div></div>

    <div class="bottom">
      <section class="vp">
        <div class="dock-title"><h2>Visual Preview</h2><button aria-label="Float"><svg><use href="#float"/></svg></button><button aria-label="Close"><svg><use href="#close"/></svg></button></div>
        <div class="vp-body">
          <div class="vtools">
            <button class="on" aria-label="Select features"><svg viewBox="0 0 16 16"><path d="M2.500 1.500H13.500V9.500H2.500Z" fill="#5a95d2" stroke="#1c2b33" stroke-dasharray="2 1.500"/><circle cx="7" cy="9.500" r="3.500" fill="#bcdcf5" stroke="#1c2b33" stroke-width="1.500"/><path d="M4.500 12L1.500 15.500" stroke="#1c2b33" stroke-width="2"/><path d="M10 8L16 13L13.500 13.500L14.500 15.500L13 16L12 14L10.500 15Z" fill="#1c2b33"/></svg></button>
            <i></i>
            <button class="on" aria-label="Display control"><svg><use href="#view"/></svg></button>
            <button class="on" aria-label="Table"><svg viewBox="0 0 16 16"><path d="M.5.500H15.500V15.500H.5ZM.5 5.500H15.500M.5 10.500H15.500M5.500.500V15.500M10.500.500V15.500" fill="#d5e8f8" stroke="#1c2b33" stroke-width="1.200"/></svg></button>
            <button aria-label="Graphics"><svg viewBox="0 0 16 16"><rect x=".5" y=".5" width="15" height="15" fill="#93d78f" stroke="#3c6e3a"/><path d="M2.500 4.500L5 7L9 6L11 3.500M3.500 9.500L6 10V13L11 12.500L13.500 7.500L10.500 6.500" fill="none" stroke="#f5fff5" stroke-width="1.800"/><path d="M2 5.500H5M6 6L9 5M10 3H12M7 13H11M12 8V10" fill="none" stroke="#3b4a3b" stroke-width="1.200"/></svg></button>
            <button class="on" aria-label="Feature information"><svg viewBox="0 0 16 16"><path d="M.5 1H11V15H.5Z" fill="#aac6d6" stroke="#4d5a61"/><path d="M1 4H10M1 7H10M1 10H8M1 13H8" stroke="#2b3b44"/><circle cx="11" cy="9.500" r="4.700" fill="#ffd899" stroke="#2b2b2b"/><path d="M11 6.500V8M11 9V12.500" stroke="#222" stroke-width="1.500"/></svg></button>
            <i></i>
            <button aria-label="Data Inspector"><svg viewBox="0 0 16 16"><use href="#face" width="16" height="15"/><circle cx="8.500" cy="8.500" r="3.500" fill="#ffe9a8" stroke="#333" stroke-width="1.400"/><path d="M6 11L2 15.500" stroke="#333" stroke-width="2"/></svg></button>
          </div>
          <fieldset class="dc"><legend>Display Control</legend>
            <ul>
              <li><label><input type="checkbox" checked><svg><use href="#view"/></svg>View</label><span class="n">( <a href="#view-1">1</a>)</span></li>
              <li class="sub"><svg class="tw"><use href="#chev-r"/></svg><label><input type="checkbox" checked><svg class="insp"><use href="#inspect"/></svg>ListExploder_&lt;...</label><span class="n">( <a href="#rejected-1">1</a>)</span></li>
            </ul>
          </fieldset>
          <fieldset class="tb"><legend>Table</legend>
            <div class="trow"><span class="combo white"><select aria-label="Table source"><option>ListExploder_&lt;Rejected&gt;</option></select><svg class="cv"><use href="#combo-v"/></svg></span><button class="cols">Columns...</button></div>
            <div class="grid">
              <table>
                <colgroup><col class="k0"><col class="k1"><col class="k2"><col class="k1"><col class="k3"><col></colgroup>
                <thead><tr><th></th><th>datatype</th><th>fme_basename</th><th>fme_color</th><th>fme_dataset</th><th>fme_feature_type</th></tr></thead>
                <tbody><tr><th>1</th><td>&lt;missing&gt;</td><td>&lt;missing&gt;</td><td>&lt;missing&gt;</td><td>&lt;missing&gt;</td><td class="val">RoutePoint</td></tr></tbody>
              </table>
              <div class="hbar"><svg><use href="#chev-l"/></svg><div class="rail"><i class="thumb table-h"></i></div><svg><use href="#chev-r"/></svg></div>
            </div>
            <div class="trow find"><span class="search"><svg viewBox="0 0 14 14"><circle cx="5.500" cy="5.500" r="4" fill="none" stroke="#1c2b33" stroke-width="1.800"/><path d="M8.500 8.500L13 13" stroke="#1c2b33" stroke-width="2"/></svg><input type="text" aria-label="Search"></span><label for="col">in</label><span class="combo"><select id="col"><option>any column</option></select><svg class="cv"><use href="#combo-v"/></svg></span><span>1 row(s)</span></div>
          </fieldset>
        </div>
        <div class="btabs"><button class="sel">Visual Preview</button><button>Translation Log</button></div>
      </section>
      <section class="fi">
        <div class="dock-title"><h2>Feature Information</h2><button aria-label="Float"><svg><use href="#float"/></svg></button><button aria-label="Close"><svg><use href="#close"/></svg></button></div>
        <div class="fi-box">
          <table>
            <colgroup><col class="kp"><col></colgroup>
            <thead><tr><th>Property</th><th>Value</th></tr></thead>
            <tbody>
              <tr><td class="i1"><span class="alt">Max Extents</span></td><td class="alt">-5.532943582978407, 50.12169744861702, 0</td></tr>
              <tr><td class="i0"><svg><use href="#chev-d"/></svg><strong>Attributes (36)</strong></td><td></td></tr>
              <tr><td class="i2"><span class="alt"><mark>_band{0}.value (32 bit real)</mark></span></td><td class="alt">6</td></tr>
              <tr><td class="i2"><span>datatype (string)</span></td><td>Generic</td></tr>
              <tr><td class="i2"><span class="alt">elevation (encoded: UTF-16LE)</span></td><td class="alt">0</td></tr>
            </tbody>
          </table>
          <div class="vbar"><svg><use href="#chev-u"/></svg><div class="rail"><i class="thumb fi-v"></i></div><svg><use href="#chev-d"/></svg></div>
          <div class="hbar"><svg><use href="#chev-l"/></svg><div class="rail"><i class="thumb fi-h"></i></div><svg><use href="#chev-r"/></svg></div>
        </div>
        <div class="pager"><label for="fs">Features Selected:</label><input id="fs" type="text" value="0" disabled><span>of 0</span><button disabled aria-label="Previous"><svg viewBox="0 0 6 10"><path d="M6 0V10L1 5Z" fill="#777"/></svg></button><button disabled aria-label="Next"><svg viewBox="0 0 6 10"><path d="M0 0V10L5 5Z" fill="#777"/></svg></button></div>
      </section>
    </div>
  </section>
</main>
<footer class="status"><span></span></footer>
</body>
</html>
```

FILE: styles.css
```css
:root {
  --ui: Roboto, "Open Sans", sans-serif;
  --small: "DejaVu Sans Condensed", "DejaVu Sans", sans-serif;
  --ink: #1c2b33;
  --line: #dcdcdc;
  --box: #828790;
}
* { box-sizing: border-box; }
body {
  margin: 0; height: 100vh; overflow: hidden;
  display: flex; flex-direction: column;
  background: #f0f0f0; color: #000;
  font: 11px/16px var(--small);
}
h1, h2, h3, p, ul { margin: 0; padding: 0; font-size: inherit; font-weight: normal; }
ul { list-style: none; }
svg { display: block; flex: none; overflow: visible; }
button { font: inherit; color: inherit; background: none; border: 0; padding: 0; margin: 0; }
input, select { font: inherit; color: inherit; margin: 0; border-radius: 0; }
.defs { width: 0; height: 0; position: absolute; }

/* title and menu */
.titlebar { display: flex; align-items: center; height: 24px; padding: 0 20px 0 3px; background: #fff; font: 12px/16px var(--ui); }
.logo { width: 16px; height: 18px; margin-right: 5px; }
.winbtns { display: flex; margin-left: auto; gap: 36px; }
.winbtns svg { width: 10px; height: 10px; }
.menubar { display: flex; gap: 15px; height: 21px; padding: 0 8px; background: #fff; border-bottom: 1px solid #f0f0f0; font: 12px/16px var(--ui); }

/* main toolbar */
.toolbar { display: flex; align-items: center; gap: 1px; height: 50px; padding: 0 3px 0 4px; border-bottom: 1px solid #b5b5b5; }
.grip { width: 2px; height: 42px; margin-right: 2px; background: repeating-linear-gradient(#c4c4c4 0 2px, #f0f0f0 2px 4px); }
.tool { display: flex; flex-direction: column; align-items: center; height: 46px; padding: 4px 5px 0; font-family: Roboto, sans-serif; line-height: 16px; border: 1px solid transparent; white-space: nowrap; }
.tool svg { width: 24px; height: 24px; margin: 0 -4px; }
.tool:disabled { color: #868686; }
.tool.on { background: #bfdcf3; border-color: #90c8f6; }
.drop { padding: 0 0 0 2px; align-self: center; }
.drop svg { width: 9px; height: 5px; }
.sep { width: 1px; height: 40px; margin: 0 2px; background: #d0d0d0; }
.zoombox { width: 36px; height: 21px; margin: 0 7px 0 5px; padding: 0 2px; border: 1px solid #7a7a7a; background: #fff; }
.round svg { width: 16px; height: 16px; }
.slider { width: 84px; height: 26px; margin: 0 6px; background: linear-gradient(#aaa, #aaa) 5px 0/1px 5px no-repeat, linear-gradient(#aaa, #aaa) 42px 0/1px 5px no-repeat, linear-gradient(#aaa, #aaa) 78px 0/1px 5px no-repeat; }
.slider input { display: block; width: 84px; height: 20px; margin-top: 5px; appearance: none; background: linear-gradient(#d6d6d6, #d6d6d6) 0 7px/84px 4px no-repeat; }
.slider input::-webkit-slider-thumb { appearance: none; width: 12px; height: 19px; background: #0078d7; clip-path: polygon(50% 0, 100% 25%, 100% 100%, 0 100%, 0 25%); }

/* layout */
.work { flex: 1; min-height: 0; display: flex; gap: 4px; padding-top: 2px; }
.left { width: 292px; flex: none; display: flex; flex-direction: column; }
.right { flex: 1; min-width: 0; display: flex; flex-direction: column; }
.dock-title { display: flex; align-items: center; gap: 11px; height: 19px; padding: 0 6px 0 4px; border: 1px solid #b9b9b9; background: #dadada; font: 12px/16px var(--ui); }
.dock-title h2 { flex: 1; }
.dock-title svg { width: 10px; height: 10px; }

/* scroll bars */
.vbar, .hbar { display: flex; background: #f0f0f0; }
.vbar { flex-direction: column; width: 16px; }
.hbar { height: 16px; }
.vbar > svg, .hbar > svg { width: 10px; height: 10px; margin: 3px; stroke: #555; }
.rail { flex: 1; display: flex; min-width: 0; min-height: 0; }
.vbar .rail { flex-direction: column; }
.thumb { background: #cdcdcd; }

/* navigator */
.nav-box { display: flex; height: 245px; margin: 4px 2px 7px; border: 1px solid var(--box); background: #fff; overflow: hidden; }
.tree { flex: 1; min-width: 0; overflow: hidden; font: 12px/20px var(--ui); }
.tree li { display: flex; align-items: center; height: 20px; padding-left: 24px; white-space: nowrap; }
.tree .lv1 { padding-left: 4px; }
.tw { width: 10px; height: 10px; margin-right: 9px; stroke: #aaa; }
.tw.open { stroke: #555; }
.tree .ic { width: 16px; height: 16px; margin-right: 6px; }
.green { fill: #a5dba3; stroke: #2f4a33; }
.nav-thumb { height: 114px; }

/* parameter editor */
.params { flex: 1; padding: 15px 9px 0; }
.ptools { display: flex; align-items: center; gap: 7px; height: 26px; padding-left: 5px; }
.ptools svg { width: 24px; height: 24px; }
.psep { width: 1px; height: 24px; background: #d0d0d0; margin: 0 -1px; }
.phead { display: flex; gap: 6px; margin: 14px 0 9px; }
.phead svg { width: 32px; height: 32px; }
.phead h3 { font-size: 13px; font-weight: bold; line-height: 18px; }
.phead p { line-height: 12px; }
fieldset { margin: 0; min-width: 0; padding: 0 8px 0 9px; border: 1px solid var(--line); }
legend { padding: 0 3px; margin-left: -3px; line-height: 16px; }
.params fieldset { display: grid; gap: 6px 7px; align-items: center; justify-items: stretch; }
.params label { text-align: right; white-space: nowrap; }
.params .g1 { grid-template-columns: 92px 1fr; padding: 9px 9px; }
.params .g2 { grid-template-columns: 118px 1fr 18px; row-gap: 7px; padding: 9px 10px 11px; margin-top: 4px; }
.params .g3 { grid-template-columns: 95px 1fr 18px; padding: 9px 10px; margin-top: 4px; }
.params input { width: 100%; height: 20px; padding: 0 2px; border: 1px solid #7a7a7a; background: #fff; }
.params input:disabled { background: #f0f0f0; border-color: #c4c4c4; }
.params .off { color: #868686; }
.combo { display: grid; align-items: center; min-width: 0; }
.combo > * { grid-row: 1; grid-column: 1; }
.combo select { width: 100%; height: 21px; padding: 0 18px 0 2px; appearance: none; border: 1px solid #adadad; background: #e1e1e1; }
.combo select.with-icon { padding-left: 24px; }
.combo svg { pointer-events: none; }
.combo .cv { justify-self: end; width: 10px; height: 10px; margin-right: 4px; }
.attr { width: 12px; height: 14px; margin-left: 8px; }
.combo.white select { background: #fff; border-color: #7a7a7a; }
.dd { display: grid; place-items: center; width: 18px; height: 19px; border: 1px solid #adadad; background: #e9e9e9; }
.dd:disabled { background: #ccc; border-color: #bfbfbf; color: #868686; }
.dd svg { width: 9px; height: 5px; }
.pbtns { display: flex; justify-content: flex-end; gap: 8px; margin-top: 24px; }
.pbtns button { width: 73px; height: 21px; border: 1px solid #bfbfbf; background: #ccc; color: #868686; }

/* bottom tabs */
.btabs { display: flex; height: 22px; border-top: 1px solid #a0a0a0; }
.btabs button { height: 19px; padding: 0 10px; border-bottom: 1px solid var(--line); }
.btabs .sel { height: 21px; background: #fff; border-right: 1px solid var(--line); }

/* canvas tabs */
.tabs { display: flex; align-items: flex-end; height: 21px; }
.tab { display: flex; align-items: center; height: 20px; gap: 12px; padding: 0 6px 0 12px; border: 1px solid var(--line); border-bottom: 0; }
.tab.sel { height: 21px; padding: 0 9px 0 14px; background: #fff; gap: 15px; }
.tab svg { width: 10px; height: 10px; }
.canvas-frame { flex: 1; min-height: 0; display: flex; margin-right: 2px; padding: 1px 1px 2px; border: 1px solid var(--line); background: #fff; }
.canvas-box { flex: 1; min-width: 0; display: grid; grid-template: 1fr 16px / 1fr 16px; border: 1px solid var(--box); background: #fff; }
.canvas-box > .hbar { grid-column: 1 / 3; padding-right: 16px; }
.canvas-box > .vbar { grid-column: 2; grid-row: 1; }
.canvas { grid-column: 1; grid-row: 1; position: relative; overflow: hidden; min-height: 0; font-size: 11px; }
.canvas-v { height: 137px; margin-top: 21px; }
.canvas-h { width: 1381px; margin-left: 143px; }
.canvas .links { position: absolute; inset: 0; width: 100%; height: 100%; }
.links path { fill: none; stroke: #000; stroke-width: 1.200; }
.count { position: absolute; line-height: 16px; font-size: 12px; }
.c193 { left: 461px; top: 232px; color: #999; }
.c1 { left: 838px; top: 273px; }

.node { position: absolute; display: flex; align-items: center; height: 34px; width: 160px; }
.node b, .xtitle b { flex: 1; font-weight: normal; font-size: 12px; }
.badge { width: 34px; height: 34px; position: relative; }
.body { flex: 1; min-width: 0; display: flex; align-items: center; height: 22px; border: 1px solid var(--ink); background: #ffd899; }
.rd .badge { margin-right: -17px; }
.rd .body { padding: 0 3px 0 18px; border-radius: 0 6px 6px 0; }
.rd .port { margin-left: -3px; }
.wr .port { margin-right: -3px; position: relative; }
.wr .body { padding: 0 17px 0 5px; border-radius: 6px 0 0 6px; }
.wr .badge { margin-left: -17px; }
.port { width: 10px; height: 10px; }
.tri { width: 8px; height: 8px; margin-right: 3px; }
.tri.tan { fill: #a9a48c; }
.tri.grey { fill: #8fa9c2; }
.tri.yel { fill: #f2e24e; }
.gear { width: 15px; height: 15px; fill: none; stroke: #77705c; }
.insp { width: 14px; height: 14px; margin-left: 1px; fill: #62c462; }
.insp.y { fill: #e6dd4c; }
.off .body { background: #e6e6e6; border-color: #a0a4a6; }
.off .gear { stroke: #888; }
.rd { left: 154px; width: 159px; }
.n-geotiff { top: 34px; }
.n-metadata { top: 116px; }
.n-route { top: 160px; }
.n-routepoint { top: 204px; }
.n-track { top: 248px; }
.n-trackpoint { top: 292px; }
.n-waypoint { top: 335px; }
.w-metadata { left: 618px; top: 34px; }
.w-track { left: 352px; top: 411px; }
.w-trackpoint { left: 315px; top: 535px; }
.w-waypoint { left: 171px; top: 594px; }

.attrs li { display: flex; align-items: center; height: 17px; padding-left: 4px; border: 1px solid var(--ink); border-width: 0 1px 1px; background: #d4d4d4; white-space: nowrap; }
.attrs li:nth-child(even) { height: 18px; }
.attrs svg { width: 11px; height: 11px; }
.stack { position: absolute; width: 160px; }
.stack .node { left: 0; top: 0; }
.stack .attrs { width: 99px; margin: 28px 0 0 28px; }
.attrs.in svg { margin: 0 2px 0 -13px; }
.in li:last-child { border-radius: 0 0 4px 4px; }
.w-route { left: 1164px; top: 23px; }
.w-routepoint { left: 1304px; top: 343px; }

.xf { position: absolute; }
.xtitle, .xrow { display: flex; align-items: center; border: 1px solid var(--ink); border-radius: 6px; }
.xtitle { height: 22px; padding: 0 3px; background: #98c0ea; }
.xtitle .gear { stroke: #56789c; }
.xrow { height: 18px; margin: 0 14px; padding-left: 4px; background: #b5d3f1; }
.xrow span { flex: 1; }
.xrow .tri { margin-right: 2px; }
.xrow .insp { margin-right: 3px; }
.pin { margin: 0 3px 0 -12px; }
.pout { margin-right: -8px; }
.extractor { left: 625px; top: 210px; width: 182px; }
.extractor .xrow:nth-child(3) { margin-bottom: 1px; }
.extractor .attrs { width: 141px; margin-left: 20px; }
.halo { position: absolute; left: 881px; top: 271px; bottom: 0; width: 157px; background: #d3e4f6; border-radius: 5px 5px 0 0; }
.exploder { left: 896px; top: 275px; width: 139px; }
.exploder .attrs { width: 99px; margin-left: 20px; }
.attrs.outp svg { margin: 0 -9px 0 auto; }
.mini { position: absolute; left: 884px; top: 242px; display: flex; gap: 7px; padding: 4px; border: 1px solid var(--line); background: #f0f0f0; }
.mini svg { width: 15px; height: 16px; }

/* bottom docks */
.bottom { display: flex; gap: 4px; padding-top: 7px; height: 200px; flex: none; }
.vp { width: 816px; flex: none; display: flex; flex-direction: column; }
.fi { flex: 1; min-width: 0; display: flex; flex-direction: column; }
.vp-body { flex: 1; display: flex; }
.vtools { width: 33px; padding: 2px 0 0 2px; }
.vtools button { display: grid; place-items: center; width: 23px; height: 22px; border: 1px solid transparent; }
.vtools .on { background: #bfdcf3; border-color: #90c8f6; }
.vtools svg { width: 16px; height: 16px; }
.vtools i { display: block; width: 17px; height: 1px; margin: 3px; background: #c4c4c4; }
.vp fieldset { padding: 5px 5px 3px; margin-bottom: 1px; display: flex; flex-direction: column; }
.vp .dc { width: 191px; margin-right: 5px; padding-top: 3px; }
.dc ul { flex: 1; padding: 1px 4px; border: 1px solid var(--box); background: #fff; font: 12px/20px var(--ui); }
.dc li, .dc label { display: flex; align-items: center; height: 20px; white-space: nowrap; }
.dc .n { margin-left: 4px; }
.dc label input { appearance: none; width: 13px; height: 13px; margin-right: 6px; border: 1px solid #333; background: #fff url("data:image/svg+xml,%3Csvg xmlns='http://www.w3.org/2000/svg' viewBox='0 0 11 11'%3E%3Cpath d='M1.500 5.500L4.300 8.300L9.700 2.500' fill='none' stroke='%23333' stroke-width='1.300'/%3E%3C/svg%3E"); }
.dc label svg { width: 16px; height: 16px; margin: 0 8px 0 0; }
.sub .tw { margin: 0 10px 0 0; }
.n a { color: #00f; }
.tb { flex: 1; }
.trow { display: flex; align-items: center; gap: 7px; height: 21px; }
.trow .combo { flex: 1; }
.cols { width: 73px; height: 21px; border: 1px solid #adadad; background: #e1e1e1; }
.grid { margin: 7px 0 6px; border: 1px solid var(--box); background: #fff; }
.grid table { width: 100%; table-layout: fixed; border-collapse: collapse; margin-bottom: 5px; }
.grid th, .grid td { height: 22px; padding: 0 4px; text-align: left; border-right: 1px solid var(--line); border-bottom: 1px solid var(--line); white-space: nowrap; color: #808080; }
.grid th { color: #000; font-weight: bold; }
.grid thead th { border-bottom: 0; height: 25px; }
.grid .val { color: #000; }
.k0 { width: 15px; }
.k1 { width: 100px; }
.k2 { width: 119px; }
.k3 { width: 104px; }
.table-h { width: 34px; margin-left: 1px; }
.search { display: flex; align-items: center; width: 255px; height: 21px; padding-left: 4px; border: 1px solid #7a7a7a; background: #fff; }
.search svg { width: 13px; height: 13px; }
.search input { flex: 1; min-width: 0; border: 0; height: 18px; }

.fi-box { display: grid; grid-template: auto 16px / 1fr 16px; margin: 10px 9px 6px; border: 1px solid var(--box); background: #fff; }
.fi-box > .hbar { grid-column: 1 / 3; padding-right: 16px; }
.fi-box table { table-layout: fixed; border-collapse: collapse; width: 100%; font: 12px/17px var(--ui); }
.fi-box th, .fi-box td { padding: 0 0 0 3px; height: 17px; text-align: left; font-weight: normal; white-space: nowrap; overflow: hidden; }
.fi-box thead th { height: 24px; border-right: 1px solid var(--line); }
.kp { width: 279px; }
.fi-box span { display: block; padding-left: 3px; }
.fi-box .alt { background: #e8e7e3; }
.fi-box .i0 svg { display: inline-block; width: 10px; height: 10px; margin: 0 9px 0 1px; stroke: #555; }
.fi-box .i1 { padding-left: 20px; }
.fi-box .i2 { padding-left: 40px; }
.fi-box mark { display: inline-block; margin-left: -3px; padding: 0 3px; background: #c3c2be; }
.fi-v { height: 18px; margin-top: 8px; }
.fi-h { flex: 1; margin-right: 9px; }
.pager { display: flex; justify-content: flex-end; align-items: center; gap: 6px; padding-right: 18px; height: 22px; }
.pager input { width: 11px; height: 21px; padding: 0 1px; border: 1px solid #c4c4c4; color: #868686; background: #f0f0f0; }
.pager button { padding: 0 0 0 10px; }
.pager svg { width: 6px; height: 10px; }

.status { height: 25px; flex: none; border-top: 1px solid #808080; padding-top: 1px; }
.status span { display: block; width: 641px; height: 22px; border-right: 1px solid #c8c8c8; }
```
